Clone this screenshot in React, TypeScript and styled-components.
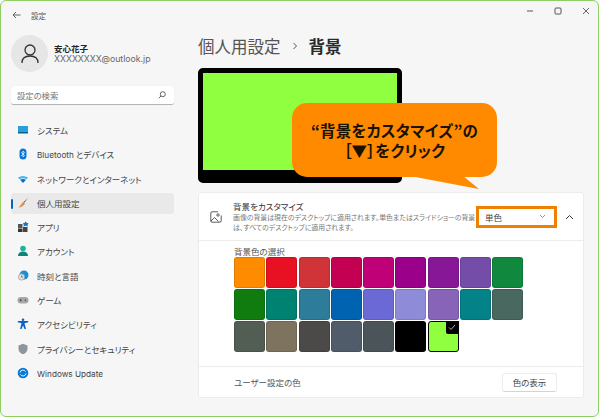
import React from "react";
import styled, { createGlobalStyle } from "styled-components";

const Global = createGlobalStyle`
  html, body { margin: 0; padding: 0; background: #fff; }
  body {
    font-family: "Noto Sans CJK JP", "Liberation Sans", sans-serif;
    font-feature-settings: "palt";
    color: #333;
  }
  * { box-sizing: border-box; }
`;

const Frame = styled.div`
  width: 599px;
  height: 417px;
  display: flex;
  background: #f6f6f6;
  border: 1px solid #8fce63;
  border-radius: 6px;
  overflow: hidden;
`;
const Sidebar = styled.aside`
  width: 197px;
  flex: none;
  padding: 0 24px 0 10px;
  display: flex;
  flex-direction: column;
`;
const BackRow = styled.div`
  height: 28px;
  display: flex;
  align-items: center;
  gap: 10px;
  padding-left: 1px;
  font-size: 7.5px;
  color: #555;
`;
const Profile = styled.div`
  margin-top: 6px;
  height: 37px;
  display: flex;
  align-items: center;
  gap: 6px;
`;
const Avatar = styled.div`
  width: 37px;
  height: 37px;
  border-radius: 50%;
  background: #e6e6e6;
  display: flex;
  align-items: center;
  justify-content: center;
`;
const ProfileText = styled.div`
  display: flex;
  flex-direction: column;
`;
const UserName = styled.div`
  font-size: 8.5px;
  line-height: 11px;
  font-weight: 700;
  color: #222;
`;
const UserMail = styled.div`
  font-size: 8.75px;
  line-height: 11px;
  color: #666;
  font-family: "Inter", "Liberation Sans", sans-serif;
`;
const Search = styled.div`
  margin-top: 14px;
  height: 19px;
  width: 163px;
  background: #fff;
  border-radius: 3px;
  border-bottom: 1px solid #b5b5b5;
  box-shadow: 0 0 1px rgba(0,0,0,.15);
  padding: 0 8px 0 6px;
  display: flex;
  align-items: center;
  justify-content: space-between;
  font-size: 8.3px;
  color: #777;
`;
const Nav = styled.nav`
  margin-top: 15px;
  display: flex;
  flex-direction: column;
  gap: 3.3px;
  width: 163px;
`;
const NavRow = styled.div<{ $active?: boolean }>`
  position: relative;
  height: 21px;
  border-radius: 3px;
  display: flex;
  align-items: center;
  gap: 8px;
  padding: 0 0 1px 6px;
  font-size: 8.5px;
  color: #444;
  background: ${(p) => (p.$active ? "#e9e9e9" : "transparent")};
  ${(p) =>
    p.$active
      ? `&::before { content: ""; position: absolute; left: 0; top: 6px; width: 2px; height: 10px; border-radius: 1px; background: #0a64b4; }`
      : ""}
`;
const NavIcon = styled.svg`
  width: 12px;
  height: 12px;
  flex: none;
`;
const NavLatin = styled.span`
  font-family: "Inter", "Noto Sans CJK JP", sans-serif;
  font-size: 8.2px;
`;

const Main = styled.main`
  flex: 1;
  min-width: 0;
  padding-right: 14px;
  display: flex;
  flex-direction: column;
  position: relative;
`;
const Controls = styled.div`
  height: 20px;
  margin-right: -14px;
  padding-right: 8px;
  display: flex;
  justify-content: flex-end;
  align-items: center;
  gap: 20px;
`;
const Crumbs = styled.div`
  margin-top: 12px;
  height: 26px;
  display: flex;
  align-items: center;
  font-size: 16.5px;
  color: #555;
`;
const CrumbSep = styled.svg`
  width: 6px;
  height: 8px;
  margin: 0 11px;
`;
const CrumbNow = styled.span`
  font-weight: 700;
  color: #2a2a2a;
`;
const Preview = styled.div`
  margin-top: 9px;
  width: 204px;
  height: 115px;
  background: #8fff3f;
  border: 5px solid #000;
  border-bottom-width: 13px;
  border-radius: 5px;
  flex: none;
`;
const Card = styled.section`
  margin-top: 9px;
  background: #fff;
  border: 1px solid #ececec;
  border-radius: 3px;
  height: 206px;
  display: flex;
  flex-direction: column;
`;
const CardHead = styled.div`
  height: 48px;
  flex: none;
  border-bottom: 1px solid #ececec;
  display: flex;
  align-items: center;
  padding-left: 11px;
`;
const HeadText = styled.div`
  margin-left: 11px;
`;
const HeadTitle = styled.div`
  font-size: 8.5px;
  line-height: 11px;
  color: #333;
`;
const HeadDesc = styled.div`
  font-size: 6.9px;
  line-height: 10px;
  color: #777;
  white-space: nowrap;
`;
const Dropdown = styled.div`
  margin-left: auto;
  width: 81px;
  height: 22px;
  border: 3px solid #f08000;
  padding: 0 8px 0 6px;
  display: flex;
  align-items: center;
  justify-content: space-between;
  font-size: 8.5px;
  color: #444;
`;
const Caret = styled.svg`
  margin: 0 9px 0 8px;
  width: 9px;
  height: 6px;
`;
const ColorSection = styled.div`
  height: 126px;
  flex: none;
  padding: 5px 0 0 35px;
  border-bottom: 1px solid #ececec;
`;
const ColorLabel = styled.div`
  font-size: 8.5px;
  line-height: 11px;
  color: #555;
`;
const Swatches = styled.div`
  display: grid;
  grid-template-columns: repeat(9, 31px);
  grid-auto-rows: 31px;
  column-gap: 1.3px;
  row-gap: 1.2px;
`;
const Swatch = styled.div<{ $c: string }>`
  border-radius: 3px;
  background: ${(p) => p.$c};
  border: 1px solid rgba(0, 0, 0, 0.12);
`;
const Selected = styled.div`
  position: relative;
  border-radius: 3px;
  background: #8fff3f;
  border: 1.5px solid #000;
`;
const Check = styled.div`
  position: absolute;
  right: -1px;
  top: -1px;
  width: 13px;
  height: 13px;
  background: #000;
  border-bottom-left-radius: 2px;
  display: flex;
  align-items: center;
  justify-content: center;
`;
const CustomRow = styled.div`
  flex: 1;
  padding: 0 26px 0 35px;
  display: flex;
  align-items: center;
  justify-content: space-between;
  font-size: 8.5px;
  color: #555;
`;
const ShowBtn = styled.div`
  width: 55px;
  height: 19px;
  background: #fff;
  border: 1px solid #ececec;
  border-bottom-color: #d4d4d4;
  border-radius: 3px;
  display: flex;
  align-items: center;
  justify-content: center;
  font-size: 8.5px;
  color: #444;
`;
const Callout = styled.div`
  position: absolute;
  left: 94px;
  top: 102px;
  width: 205px;
  height: 74px;
  background: #ff8a00;
  border-radius: 15px;
  display: flex;
  flex-direction: column;
  align-items: center;
  justify-content: center;
  font-size: 15.5px;
  letter-spacing: 0.2px;
  line-height: 20px;
  font-weight: 700;
  color: #1a1200;
`;
const CalloutTail = styled.svg`
  position: absolute;
  left: 118px;
  top: 73px;
  width: 70px;
  height: 14px;
`;

const swatches = [
  "#ff8c00", "#e81123", "#d13438", "#c30052", "#bf0077", "#9a0089", "#881798", "#744da9", "#10893e",
  "#107c10", "#008272", "#2d7d9a", "#0063b1", "#6b69d6", "#8e8cd8", "#8764b8", "#038387", "#486860",
  "#525e54", "#7e735f", "#4c4a48", "#515c6b", "#4a5459", "#000000",
];

const Row: React.FC<{ icon: React.ReactNode; active?: boolean; children: React.ReactNode }> = ({ icon, active, children }) => (
  <NavRow $active={active}>
    <NavIcon viewBox="0 0 12 12">{icon}</NavIcon>
    <span>{children}</span>
  </NavRow>
);

export default function App() {
  return (
    <>
      <Global />
      <Frame>
        <Sidebar>
          <BackRow>
            <svg width="9" height="8" viewBox="0 0 9 8" fill="none" stroke="#555" strokeWidth="0.9">
              <path d="M8.5 4H1M4 1 1 4l3 3" />
            </svg>
            <span>設定</span>
          </BackRow>
          <Profile>
            <Avatar>
              <svg width="18" height="20" viewBox="0 0 18 20" fill="none" stroke="#333" strokeWidth="1.3">
                <circle cx="9" cy="6" r="5" />
                <path d="M1 19c0-4.5 3-7 8-7s8 2.500 8 7" />
              </svg>
            </Avatar>
            <ProfileText>
              <UserName>安心花子</UserName>
              <UserMail>XXXXXXXX@outlook.jp</UserMail>
            </ProfileText>
          </Profile>
          <Search>
            <span>設定の検索</span>
            <svg width="8" height="8" viewBox="0 0 8 8" fill="none" stroke="#555" strokeWidth="0.9">
              <circle cx="4.800" cy="3.200" r="2.500" />
              <path d="M3 5 .8 7.200" />
            </svg>
          </Search>
          <Nav>
            <Row icon={<><rect x="1" y="2" width="10" height="7" fill="#2aa0d8" /><rect x="1" y="8" width="10" height="1.500" fill="#0c5f90" /></>}>システム</Row>
            <Row icon={<><rect x="2.500" y="0.500" width="7" height="11" rx="3.500" fill="#0a78d8" /><path d="M4.300 4 7.500 7.500 6 9V3l1.500 1.500L4.300 8" fill="none" stroke="#fff" strokeWidth=".7" /></>}>
              <NavLatin>Bluetooth</NavLatin> とデバイス
            </Row>
            <Row icon={<><path d="M1 4.500Q6 1.500 11 4.500L9.500 6.300Q6 4.300 2.500 6.300Z" fill="#46b4ee" /><path d="M3 6.800Q6 5 9 6.800L6 10Z" fill="#0a6cc4" /></>}>ネットワークとインターネット</Row>
            <Row active icon={<><path d="M7.500 5.500 11 1 8 3.800 6.500 5Z" fill="#555" /><path d="M6.500 4.800 8 6.300C7 9 4 10.500 1.500 10.500 3.500 9 4.500 6 6.500 4.800Z" fill="#ee8a3a" /></>}>個人用設定</Row>
            <Row icon={<><rect x="1" y="3" width="4.500" height="4" fill="#555" /><rect x="1" y="7.500" width="4.500" height="3.500" fill="#333" /><rect x="6" y="6" width="4.500" height="5" fill="#444" /><path d="M8.500.5 10 2l1.500.3L10.500 4l.3 1.500L8.500 4.800 6.500 5.500 6.800 3.700 5.800 2.300 7.500 2Z" fill="#0a78d8" /></>}>アプリ</Row>
            <Row icon={<><circle cx="6" cy="3.500" r="2.800" fill="#23b0a0" /><path d="M1 11c0-3 2-4.500 5-4.500s5 1.500 5 4.500Z" fill="#0e8478" /></>}>アカウント</Row>
            <Row icon={<><circle cx="7" cy="5" r="4.500" fill="#1690d8" /><circle cx="4.500" cy="7" r="3.200" fill="#dcdcdc" stroke="#888" strokeWidth=".5" /><path d="M4.500 5.500V7H6" stroke="#444" strokeWidth=".6" fill="none" /></>}>時刻と言語</Row>
            <Row icon={<><rect x=".5" y="3" width="11" height="6.500" rx="3.200" fill="#a8a8a8" /><path d="M2.500 6.200h2.500M3.700 5v2.500" stroke="#444" strokeWidth=".7" /><circle cx="8.500" cy="6.200" r=".8" fill="#444" /></>}>ゲーム</Row>
            <Row icon={<g fill="#0a64c4"><circle cx="6" cy="1.800" r="1.300" /><path d="M.8 3h10.400v1.200L7.500 5.200 9 11H7.500L6 7.500 4.500 11H3L4.500 5.200.8 4.200Z" /></g>}>アクセシビリティ</Row>
            <Row icon={<path d="M6 .8 10.500 2.500V6C10.500 8.500 8.500 10.500 6 11.300 3.500 10.500 1.500 8.500 1.500 6V2.500Z" fill="#8c969e" />}>プライバシーとセキュリティ</Row>
            <Row icon={<><circle cx="6" cy="6" r="5.300" fill="#0a7ad8" /><path d="M3 5.500A3 3 0 0 1 8.500 4.500M9 6.500A3 3 0 0 1 3.500 7.500" stroke="#fff" strokeWidth=".9" fill="none" /></>}>
              <NavLatin>Windows Update</NavLatin>
            </Row>
          </Nav>
        </Sidebar>
        <Main>
          <Controls>
            <svg width="8" height="8" viewBox="0 0 8 8" stroke="#444" strokeWidth=".9"><path d="M1 4h6" /></svg>
            <svg width="8" height="8" viewBox="0 0 8 8" stroke="#444" strokeWidth=".9" fill="none"><rect x="1" y="1" width="6" height="6" rx="1" /></svg>
            <svg width="8" height="8" viewBox="0 0 8 8" stroke="#444" strokeWidth=".8"><path d="m1 1 6 6M7 1 1 7" /></svg>
          </Controls>
          <Crumbs>
            個人用設定
            <CrumbSep viewBox="0 0 6 8" fill="none" stroke="#555" strokeWidth="1"><path d="m1.500 1 3 3-3 3" /></CrumbSep>
            <CrumbNow>背景</CrumbNow>
          </Crumbs>
          <Preview />
          <Card>
            <CardHead>
              <svg width="12" height="12" viewBox="0 0 12 12" fill="none" stroke="#333" strokeWidth=".8">
                <path d="M8 .8H2A1.300 1.300 0 0 0 .8 2v8A1.300 1.300 0 0 0 2 11.200h8A1.300 1.300 0 0 0 11.200 10V4.500" />
                <path d="m1 10 3.500-3.500 4 4" />
                <circle cx="8" cy="4" r="1.200" />
              </svg>
              <HeadText>
                <HeadTitle>背景をカスタマイズ</HeadTitle>
                <HeadDesc>画像の背景は現在のデスクトップに適用されます。単色またはスライドショーの背景<br />は、すべてのデスクトップに適用されます。</HeadDesc>
              </HeadText>
              <Dropdown>
                <span>単色</span>
                <svg width="7" height="5" viewBox="0 0 7 5" fill="none" stroke="#777" strokeWidth=".8"><path d="m1 1 2.500 2.500L6 1" /></svg>
              </Dropdown>
              <Caret viewBox="0 0 9 6" fill="none" stroke="#333" strokeWidth="1"><path d="m1 5 3.500-3.500L8 5" /></Caret>
            </CardHead>
            <ColorSection>
              <ColorLabel>背景色の選択</ColorLabel>
              <Swatches>
                {swatches.map((c, i) => <Swatch key={i} $c={c} />)}
                <Selected>
                  <Check>
                    <svg width="8" height="7" viewBox="0 0 8 7" fill="none" stroke="#ddd" strokeWidth=".8"><path d="m1 3.500 2 2L7 1" /></svg>
                  </Check>
                </Selected>
              </Swatches>
            </ColorSection>
            <CustomRow>
              <span>ユーザー設定の色</span>
              <ShowBtn>色の表示</ShowBtn>
            </CustomRow>
          </Card>
          <Callout>
            <span>“背景をカスタマイズ”の</span>
            <span>［▼］をクリック</span>
            <CalloutTail viewBox="0 0 70 14"><path d="M0 0H53L69 13Z" fill="#ff8a00" /></CalloutTail>
          </Callout>
        </Main>
      </Frame>
    </>
  );
}
